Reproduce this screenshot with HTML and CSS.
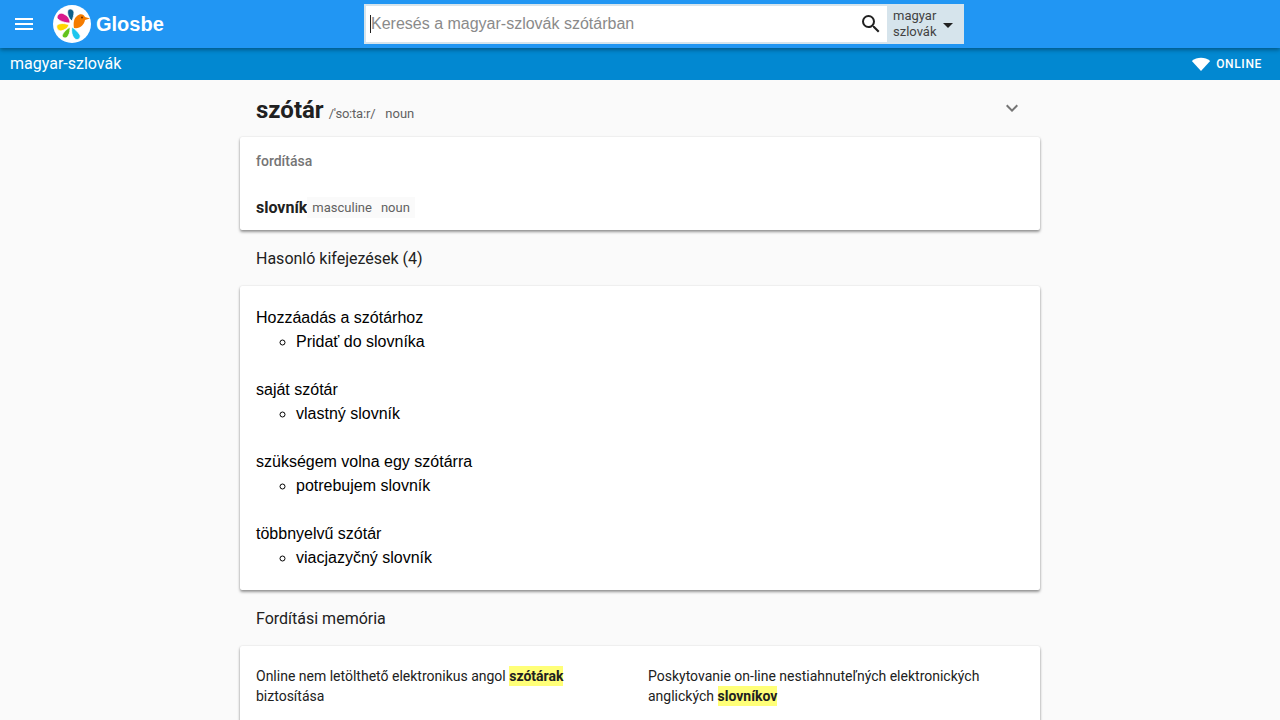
FILE: index.html
```html
<!DOCTYPE html>
<html lang="hu">
<head>
<meta charset="utf-8">
<title>Glosbe</title>
<link rel="stylesheet" href="styles.css">
</head>
<body>
<header class="topbar">
  <div class="brand">
    <svg class="menu-icon" viewBox="0 0 24 24" width="24" height="24"><path d="M3 18h18v-2H3v2zm0-5h18v-2H3v2zm0-7v2h18V6H3z" fill="#fff"/></svg>
    <svg class="logo" viewBox="0 0 38 38" width="38" height="38">
      <circle cx="19" cy="19" r="19" fill="#fff"/>
      <g stroke="#fff" stroke-width=".8">
        <path d="M17 18C12 18 6 16 4 13C4 9 8 7 11 9C15 11 17 14 17 18Z" fill="#d81b8c"/>
        <path d="M19 16C15 13 14 8 15 5C17 3 20 4 21 7C21 10 20 13 19 16Z" fill="#0f5f88"/>
        <path d="M16 20C12 18 7 18 4 20C3 23 5 26 8 26C12 25 15 23 16 20Z" fill="#ffd600"/>
        <path d="M17 22C14 24 10 27 9 31C11 34 14 33 15 31C17 28 17 25 17 22Z" fill="#62c21d"/>
        <path d="M19 22C18 27 19 31 22 34C25 36 28 33 27 30C25 27 22 24 19 22Z" fill="#1cc6ee"/>
      </g>
      <path d="M21 23C20 18 21 13 24 11C27 8 31 9 32 12L37 13.500L32 15C31 20 27 24 21 23Z" fill="#f57c00"/>
      <circle cx="29" cy="12.500" r="1" fill="#6b3000"/>
    </svg>
    <span class="brand-name">Glosbe</span>
  </div>
  <form class="search">
    <div class="search-input"><span class="caret"></span><span class="placeholder">Keresés a magyar-szlovák szótárban</span></div>
    <span class="search-btn">
      <svg viewBox="0 0 24 24" width="24" height="24"><path d="M15.500 14h-.79l-.28-.27A6.471 6.471 0 0 0 16 9.500 6.500 6.500 0 1 0 9.500 16c1.610 0 3.090-.59 4.230-1.570l.27.28v.79l5 4.990L20.490 19l-4.990-5zm-6 0C7.010 14 5 11.990 5 9.500S7.010 5 9.500 5 14 7.010 14 9.500 11.990 14 9.500 14z" fill="#212121"/></svg>
    </span>
    <div class="lang-select">
      <span class="lang-names">magyar<br>szlovák</span>
      <span class="lang-arrow"></span>
    </div>
  </form>
</header>
<div class="subbar">
  <span class="subbar-title">magyar-szlovák</span>
  <span class="online">
    <svg viewBox="0 0 24 24" width="20" height="20"><path d="M12 20.500L1 8.500C4 5.700 8 4.500 12 4.500s8 1.200 11 4L12 20.500z" fill="#fff"/></svg>
    <span>ONLINE</span>
  </span>
</div>
<main class="content">
  <div class="headword">
    <div class="headword-text">
      <h1>szótár</h1>
      <span class="ipa">/'so:ta:r/</span>
      <span class="pos">noun</span>
    </div>
    <svg class="chevron" viewBox="0 0 24 24" width="24" height="24"><path d="M7.410 8.590L12 13.170l4.590-4.580L18 10l-6 6-6-6 1.410-1.410z" fill="#757575"/></svg>
  </div>
  <section class="card card-translation">
    <div class="card-label">fordítása</div>
    <div class="translation">
      <strong>slovník</strong>
      <span class="tags"><span>masculine</span><span>noun</span></span>
    </div>
  </section>
  <h2 class="section-title">Hasonló kifejezések (4)</h2>
  <section class="card card-phrases">
    <dl class="phrase"><dt>Hozzáadás a szótárhoz</dt><dd>Pridať do slovníka</dd></dl>
    <dl class="phrase"><dt>saját szótár</dt><dd>vlastný slovník</dd></dl>
    <dl class="phrase"><dt>szükségem volna egy szótárra</dt><dd>potrebujem slovník</dd></dl>
    <dl class="phrase"><dt>többnyelvű szótár</dt><dd>viacjazyčný slovník</dd></dl>
  </section>
  <h2 class="section-title">Fordítási memória</h2>
  <section class="card card-memory">
    <p>Online nem letölthető elektronikus angol <mark>szótárak</mark> biztosítása</p>
    <p>Poskytovanie on-line nestiahnuteľných elektronických anglických <mark>slovníkov</mark></p>
    <span class="source">tmClass</span>
  </section>
</main>
</body>
</html>
```
FILE: styles.css
```css
* { box-sizing: border-box; }
html, body { margin: 0; height: 720px; overflow: hidden; }
body { background: #fafafa; font-family: Roboto, "Liberation Sans", sans-serif; color: #212121; }
.topbar { position: relative; z-index: 2; height: 48px; background: #2196f3; display: flex; align-items: center; box-shadow: 0 2px 4px rgba(0,0,0,.35); }
.brand { width: 364px; display: flex; align-items: center; padding-left: 12px; }
.menu-icon { flex: none; }
.logo { flex: none; margin-left: 17px; }
.brand-name { margin-left: 5px; color: #fff; font-family: "Liberation Sans", Arial, sans-serif; font-weight: 700; font-size: 20px; }
.search { display: flex; width: 600px; height: 40px; background: #fff; border: 2px solid #d6e4ec; border-right: 0; }
.search-input { flex: 1; display: flex; align-items: center; padding-left: 4px; background: #fff; }
.caret { width: 1px; height: 18px; background: #212121; }
.placeholder { font-family: "Liberation Sans", Arial, sans-serif; font-size: 16px; color: #8a8a8a; }
.search-btn { width: 34px; display: flex; align-items: center; justify-content: center; margin-left: 1px; margin-right: -1px; }
.lang-select { width: 77px; margin: -2px 0; background: #d6e4ec; display: flex; align-items: center; padding-left: 6px; border-radius: 0 2px 2px 0; }
.lang-names { font-size: 13px; line-height: 16px; color: #424242; }
.lang-arrow { margin-left: 6px; margin-top: 2px; border: 5px solid transparent; border-top-color: #212121; border-bottom: 0; }
.subbar { height: 32px; background: #0288d1; color: #fff; display: flex; align-items: center; justify-content: space-between; padding: 0 18px 0 10px; }
.subbar-title { font-size: 16px; margin-top: -2px; }
.online { display: flex; align-items: center; gap: 5px; font-size: 12px; font-weight: 500; letter-spacing: .65px; }
.content { width: 800px; margin: 0 auto; }
.headword { height: 57px; padding: 0 16px; display: flex; align-items: center; justify-content: space-between; }
.headword-text { display: flex; align-items: baseline; padding-top: 2px; }
.headword h1 { margin: 0; font-size: 24px; font-weight: 700; }
.ipa { margin-left: 5px; font-size: 13px; letter-spacing: -.2px; color: #616161; }
.pos { margin-left: 10px; font-size: 13px; color: #616161; }
.chevron { margin-top: -2px; }
.card { background: #fff; border-radius: 2px; box-shadow: 0 2px 3px rgba(0,0,0,.4), 0 0 2px rgba(0,0,0,.12); }
.card-translation { height: 93px; padding: 16px 16px 0; }
.card-label { font-size: 14px; line-height: 16px; font-weight: 500; color: #757575; }
.translation { margin-top: 28px; display: flex; align-items: center; line-height: 20px; }
.translation strong { font-size: 16px; font-weight: 700; }
.tags { display: flex; gap: 9px; padding: 1px 5px 0; background: #fafafa; font-size: 13px; color: #616161; }
.section-title { margin: 0; height: 56px; padding: 0 16px; display: flex; align-items: center; font-size: 16px; font-weight: 400; color: #212121; }
.card-phrases { height: 304px; padding: 20px 16px 0; display: flex; flex-direction: column; gap: 24px; font-family: "Liberation Sans", Arial, sans-serif; font-size: 16px; line-height: 24px; color: #000; }
.phrase { margin: 0; }
.phrase dt { display: block; }
.phrase dd { margin: 0 0 0 40px; display: list-item; list-style: circle; }
.card-memory { height: 100px; padding: 20px 16px 0; display: grid; grid-template-columns: 360px 360px; grid-template-rows: auto auto; column-gap: 32px; font-size: 14px; line-height: 20px; }
.card-memory p { margin: 0; }
.source { grid-column: 2; margin-top: 8px; text-align: right; font-size: 12px; line-height: 16px; color: #757575; }
mark { background: #ffff78; font-weight: 700; color: #212121; padding: 2px 0; }
```
